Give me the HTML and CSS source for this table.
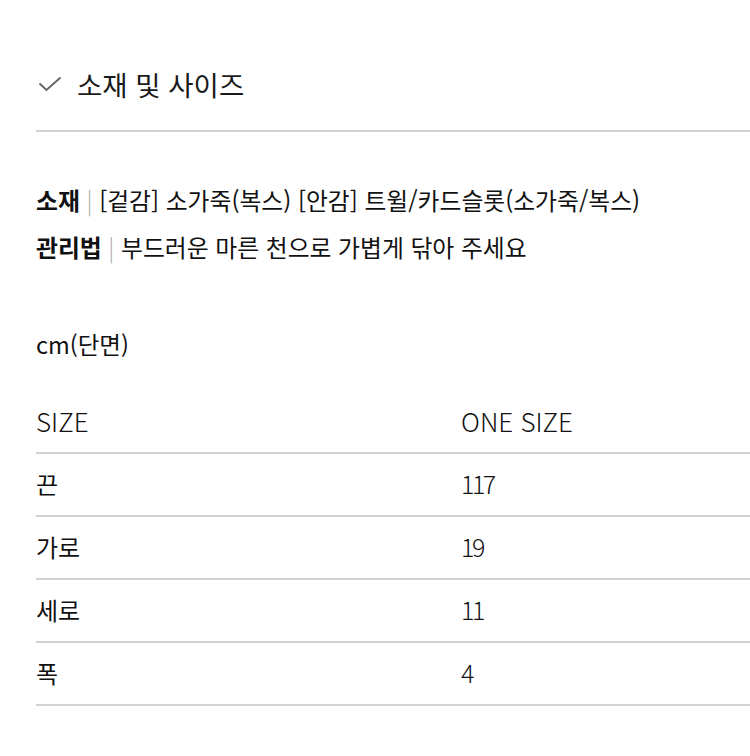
FILE: index.html
```html
<!DOCTYPE html>
<html lang="ko">
<head>
<meta charset="utf-8">
<title>소재 및 사이즈</title>
<link rel="stylesheet" href="styles.css">
</head>
<body>
<div class="wrap">
  <div class="head">
    <svg class="check" width="24" height="16" viewBox="0 0 24 16" aria-hidden="true">
      <path d="M1.5 7.5 L8.5 14 L22.5 1.5" fill="none" stroke="#666" stroke-width="2"/>
    </svg>
    <span class="title">소재 및 사이즈</span>
  </div>
  <div class="info">
    <p class="line"><b>소재</b> <span class="sep">|</span> [겉감] 소가죽(복스) [안감] 트윌/카드슬롯(소가죽/복스)</p>
    <p class="line"><b>관리법</b> <span class="sep">|</span> 부드러운 마른 천으로 가볍게 닦아 주세요</p>
  </div>
  <p class="unit">cm(단면)</p>
  <div class="table">
    <div class="row"><span class="lat">SIZE</span><span class="lat">ONE SIZE</span></div>
    <div class="row"><span>끈</span><span class="num">117</span></div>
    <div class="row"><span>가로</span><span class="num">19</span></div>
    <div class="row"><span>세로</span><span class="num">11</span></div>
    <div class="row"><span>폭</span><span class="num">4</span></div>
  </div>
</div>
</body>
</html>
```

FILE: styles.css
```css
html, body {
  margin: 0;
  padding: 0;
  background: #fff;
}
body {
  font-family: "Noto Sans CJK KR", "Noto Sans", sans-serif;
  color: #111;
  overflow: hidden;
}
.wrap {
  padding-left: 36px;
}
.head {
  margin-top: 60px;
  height: 48px;
  padding-bottom: 22px;
  border-bottom: 2px solid #d2d2d2;
  display: flex;
  align-items: center;
  gap: 15px;
}
.check {
  margin-left: 2px;
  display: block;
}
.title {
  font-size: 27.5px;
  font-weight: 400;
  color: #1a1a1a;
}
.info {
  margin-top: 44px;
}
.line {
  margin: 0;
  font-size: 23.8px;
  line-height: 47px;
  white-space: nowrap;
}
.line b {
  font-weight: 700;
}
.sep {
  color: #aaa;
  font-weight: 300;
}
.unit {
  margin: 59px 0 0;
  font-size: 23.5px;
  line-height: 30px;
  font-weight: 400;
}
.table {
  margin-top: 32px;
}
.row {
  box-sizing: border-box;
  display: grid;
  grid-template-columns: 425px 1fr;
  align-items: center;
  height: 63px;
  padding-bottom: 3px;
  border-bottom: 2px solid #d2d2d2;
  font-size: 24px;
}
.lat {
  font-weight: 300;
  font-size: 26px;
  letter-spacing: 0;
}
.num {
  font-weight: 300;
  font-size: 25px;
  letter-spacing: -2.5px;
}
```
